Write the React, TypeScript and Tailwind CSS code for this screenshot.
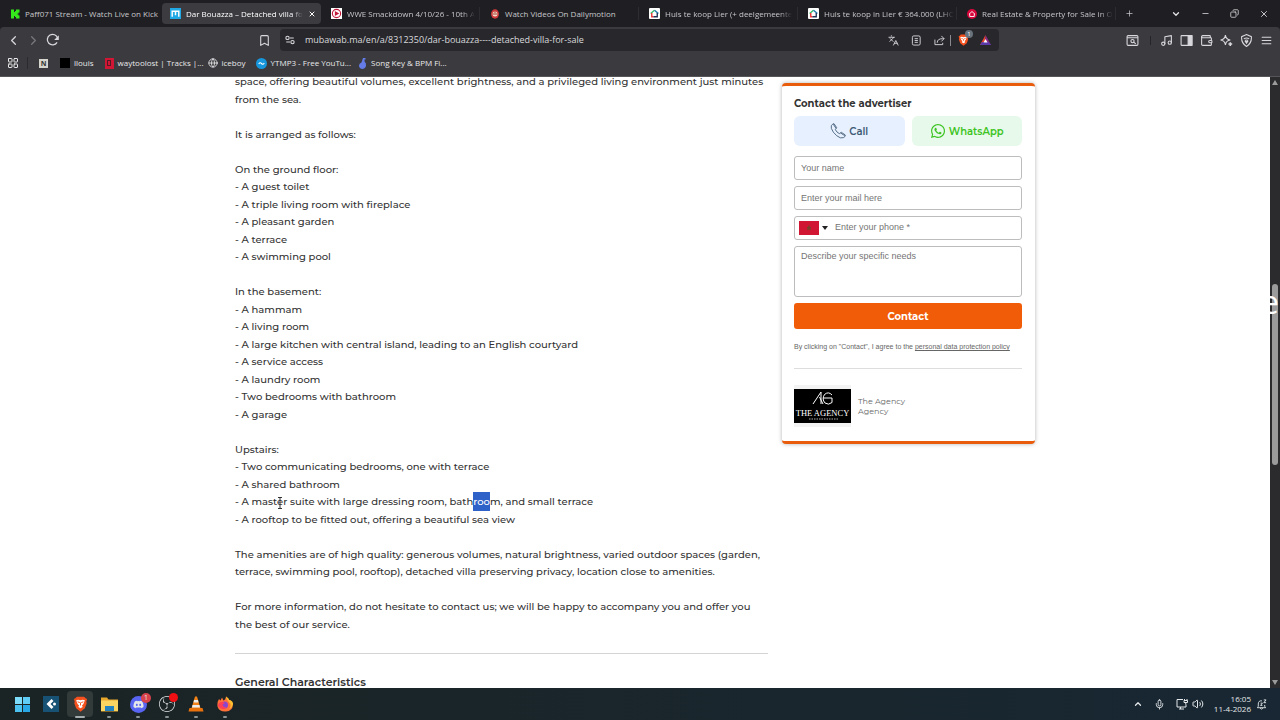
import type { ReactNode } from "react";
import {
    LuBookmark, LuChevronDown, LuChevronLeft, LuChevronRight, LuChevronUp,
    LuCopy, LuGlobe, LuLayoutGrid, LuLanguages, LuMenu, LuMic, LuMinus, LuMusic, LuPlus,
    LuVolume2, LuWallet, LuX,
} from "react-icons/lu";
import { FaWhatsapp, FaDiscord } from "react-icons/fa";
import { SiObsstudio } from "react-icons/si";

function HouseIcon() {
    return (
        <svg viewBox="0 0 20 20" className="size-[11px]">
            <rect width="20" height="20" rx="2" fill="#fff" />
            <path d="M3 10 10 4" stroke="#3b6" strokeWidth="2.5" />
            <path d="m10 4 7 6" stroke="#27a" strokeWidth="2.5" />
            <path d="M5 9v7h3" stroke="#e33" strokeWidth="2.5" fill="none" />
            <path d="M15 9v7h-7" stroke="#235" strokeWidth="2.5" fill="none" />
        </svg>
    )
}

function MubawabIcon() {
    return (
        <svg viewBox="0 0 20 20" className="size-[11px]">
            <rect width="20" height="20" fill="#21a9e6" />
            <path d="M4 16V6h12v10M10 6v7" stroke="#fff" strokeWidth="2.6" fill="none" />
        </svg>
    )
}

function BraveLion({ className }: { className: string }) {
    return (
        <svg viewBox="0 0 20 22" className={className}>
            <path d="M5 1h10l2 2 2 1-1 4 .5 2-2.5 7-6 4.500-6-4.500L1.500 10 2 8 1 4l2-1z" fill="#f4511e" />
            <path d="M4 6l3-1 3 1 3-1 3 1-2 5-2 2 1 2-3 2-3-2 1-2-2-2z" fill="#fff" />
            <path d="M6 8l3 1M14 8l-3 1M10 9v4" stroke="#f4511e" strokeWidth="1.300" />
        </svg>
    )
}

const tabs: { title: string; icon: ReactNode; active?: boolean; fade?: boolean }[] = [
    {
        title: "Paff071 Stream - Watch Live on Kick",
        icon: (
            <svg viewBox="0 0 20 20" className="size-[10px]">
                <path d="M2 1h6v5h2V4h2V1h7v6h-2v2h-2v2h2v2h2v6h-7v-3h-2v-2H8v5H2z" fill="#35e81c" />
            </svg>
        ),
    },
    { title: "Dar Bouazza – Detached villa fo", icon: <MubawabIcon />, active: true, fade: true },
    {
        title: "WWE Smackdown 4/10/26 - 10th A",
        fade: true,
        icon: (
            <svg viewBox="0 0 20 20" className="size-[11px]">
                <rect width="20" height="20" fill="#fff" />
                <circle cx="10" cy="10" r="7.5" fill="none" stroke="#c2183c" strokeWidth="2" />
                <path d="M7 5.500 15 10l-8 4.500z" fill="#c2183c" />
            </svg>
        ),
    },
    {
        title: "Watch Videos On Dailymotion",
        icon: (
            <svg viewBox="0 0 20 20" className="size-[10px]">
                <ellipse cx="10" cy="10" rx="8" ry="9.500" fill="#d0393b" />
                <circle cx="10" cy="10" r="5" fill="#f5d9c8" />
                <path d="M5 10h10M10 5v3" stroke="#9d4035" strokeWidth="2" />
            </svg>
        ),
    },
    { title: "Huis te koop Lier (+ deelgemeente", icon: <HouseIcon />, fade: true },
    { title: "Huis te koop in Lier € 364.000 (LHC", icon: <HouseIcon />, fade: true },
    {
        title: "Real Estate & Property for Sale in O",
        fade: true,
        icon: (
            <svg viewBox="0 0 20 20" className="size-[10px]">
                <circle cx="10" cy="10" r="10" fill="#d8063b" />
                <path d="M4 10.500 10 5l6 5.500h-1.500V15h-9v-4.500z" fill="none" stroke="#fff" strokeWidth="1.800" />
            </svg>
        ),
    },
];

function TabStrip() {
    return (
        <div className="flex h-[27px] shrink-0 items-center bg-[#1f1f23] pl-0.5">
            {tabs.map((tab) => (
                <button
                    key={tab.title}
                    className={
                        tab.active
                            ? "flex h-[21px] w-[159px] items-center gap-[5px] rounded bg-[#3b3b40] pr-[10px] pl-2 text-left text-white"
                            : "flex h-[13px] w-[159px] items-center gap-[5px] border-r border-[#2d2d31] pl-[10px] text-left text-[#c7c7cb] first:w-40 first:border-transparent first:pl-2"
                    }
                >
                    <span className="shrink-0">{tab.icon}</span>
                    <span className={tab.fade ? "whitespace-nowrap mask-r-from-90%" : "whitespace-nowrap"}>{tab.title}</span>
                    {tab.active && <LuX className="ml-auto size-2 shrink-0" strokeWidth={3} />}
                </button>
            ))}
            <button aria-label="New tab" className="ml-[9px] text-[#c7c7cb]"><LuPlus className="size-[9px]" /></button>
            <div className="ml-auto flex items-center gap-5 pr-[11px] text-[#e4e4e7]">
                <button aria-label="Search tabs"><LuChevronDown className="size-[10px]" strokeWidth={3} /></button>
                <button aria-label="Minimize"><LuMinus className="size-[9px]" /></button>
                <button aria-label="Restore"><LuCopy className="size-[9px] -scale-x-100" /></button>
                <button aria-label="Close"><LuX className="size-[10px]" /></button>
            </div>
        </div>
    )
}

function Toolbar() {
    return (
        <div className="flex h-[26px] shrink-0 items-center rounded-t bg-[#3b3b3f] text-[#d8d8dc]">
            <div className="flex items-center gap-[5px] pl-1.5">
                <button aria-label="Back"><LuChevronLeft className="size-[15px]" /></button>
                <button aria-label="Forward" className="text-[#77777c]"><LuChevronRight className="size-[15px]" /></button>
                <button aria-label="Reload">
                    <svg viewBox="0 0 24 24" className="size-3.5" fill="none" stroke="currentColor" strokeWidth="2.200">
                        <path d="M19 16a9 9 0 1 1 1-7" />
                        <path d="M22 4v8h-8z" fill="currentColor" stroke="none" />
                    </svg>
                </button>
            </div>
            <button aria-label="Bookmark" className="ml-[198px]"><LuBookmark className="size-[13px]" /></button>
            <div className="ml-[9px] flex h-[22px] w-[719px] items-center rounded bg-[#28282c] pl-[5px]">
                <svg viewBox="0 0 24 24" className="size-[10px] shrink-0" fill="none" stroke="currentColor" strokeWidth="2.500">
                    <circle cx="6" cy="7" r="4" />
                    <path d="M12 7h9M3 17h9" />
                    <circle cx="18" cy="17" r="4" />
                </svg>
                <input
                    aria-label="Address"
                    defaultValue="mubawab.ma/en/a/8312350/dar-bouazza----detached-villa-for-sale"
                    className="ml-2.5 min-w-0 grow text-[9px] outline-none"
                />
                <button aria-label="Translate"><LuLanguages className="size-[11px]" /></button>
                <button aria-label="Reader mode" className="ml-3">
                    <svg viewBox="0 0 22 24" className="size-[11px]" fill="none" stroke="currentColor" strokeWidth="2">
                        <rect x="2" y="2" width="17" height="20" rx="3" />
                        <path d="M7 8h7M7 12h7M7 16h7" />
                    </svg>
                </button>
                <button aria-label="Share" className="ml-3">
                    <svg viewBox="0 0 24 24" className="size-[11px]" fill="none" stroke="currentColor" strokeWidth="2">
                        <path d="M2 10v11h17v-4M7 17q0-9 12-9h3M16 2l6 6-6 6" />
                    </svg>
                </button>
                <span className="mx-[5px] h-[11px] w-px bg-[#8a8a90]" />
                <button aria-label="Shields" className="relative ml-0.5">
                    <BraveLion className="h-3 w-[11px]" />
                    <span className="absolute -top-1 left-[7px] grid size-2 place-items-center rounded-full bg-[#68727c] text-[6px] text-white">1</span>
                </button>
                <button aria-label="Rewards" className="mr-2 ml-[11px]">
                    <svg viewBox="0 0 22 20" className="h-[10px] w-[11px]">
                        <path d="M11 0 0 20h11z" fill="#e8432d" />
                        <path d="m11 0 11 20H11z" fill="#8a2a86" />
                        <path d="M0 20h22l-5-6H4z" fill="#5a39a8" />
                        <path d="m11 8 4 7H7z" fill="#fff" />
                    </svg>
                </button>
            </div>
            <div className="ml-auto flex items-center gap-[7px] pr-[7px]">
                <button aria-label="Search page">
                    <svg viewBox="0 0 24 24" className="size-[13px]" fill="none" stroke="currentColor" strokeWidth="2">
                        <rect x="2" y="3" width="20" height="18" rx="2" />
                        <path d="M2 7h20M14 15l4 3" />
                        <circle cx="12" cy="13" r="3" />
                    </svg>
                </button>
                <span className="mr-0.5 ml-1 h-[9px] w-px bg-[#252528]" />
                <button aria-label="Media"><LuMusic className="size-[13px]" /></button>
                <button aria-label="Sidebar">
                    <svg viewBox="0 0 24 24" className="size-[13px]" fill="none" stroke="currentColor" strokeWidth="2">
                        <rect x="2" y="3" width="20" height="18" rx="1" />
                        <path d="M15 3h7v18h-7z" fill="currentColor" />
                    </svg>
                </button>
                <button aria-label="Wallet"><LuWallet className="size-[13px]" /></button>
                <button aria-label="Leo AI">
                    <svg viewBox="0 0 24 24" className="size-[13px]" fill="none" stroke="currentColor" strokeWidth="2">
                        <path d="M10 2q1 8 9 9-8 1-9 9-1-8-9-9 8-1 9-9z" />
                        <path d="M19 15v7M15.500 18.500h7" strokeWidth="3" />
                    </svg>
                </button>
                <button aria-label="VPN">
                    <svg viewBox="0 0 24 24" className="size-[13px]" fill="none" stroke="currentColor" strokeWidth="2">
                        <path d="m12 1 9 4q1 12-9 18Q2 17 3 5z" />
                        <path d="M7 9q5-3 10 0M9 12q3-2 6 0" />
                        <path d="m12 17-2-3h4z" fill="currentColor" />
                    </svg>
                </button>
                <button aria-label="Menu"><LuMenu className="size-[13px]" /></button>
            </div>
        </div>
    )
}

function BookmarksBar() {
    return (
        <nav className="flex h-6 shrink-0 items-center border-b border-[#55555a] bg-[#3b3b3f] pb-[3px] pl-[7px] text-[8px] text-[#e8e8ea]">
            <button aria-label="Apps"><LuLayoutGrid className="size-3" /></button>
            <span className="ml-2 h-3 w-px bg-[#2b2b2f]" />
            <a href="#" aria-label="Notion" className="ml-[11px] grid size-[9px] place-items-center bg-[#d5d5cd] text-[7px] font-bold text-[#333]">N</a>
            <a href="#" className="ml-3 flex items-center gap-1"><span className="size-[10px] bg-black" />llouis</a>
            <a href="#" className="ml-[11px] flex items-center gap-1">
                <span className="grid h-[11px] w-[9px] place-items-center bg-[#cf1735]"><span className="h-[6px] w-1 border border-[#541824]" /></span>
                waytoolost | Tracks |...
            </a>
            <a href="#" className="ml-1 flex items-center gap-1"><LuGlobe className="size-[10px]" />iceboy</a>
            <a href="#" className="ml-[10px] flex items-center gap-1">
                <svg viewBox="0 0 20 20" className="size-[11px]">
                    <circle cx="10" cy="10" r="10" fill="#1696dc" />
                    <path d="M5 11q2-4 5-1t5-1" stroke="#fff" strokeWidth="2" fill="none" />
                </svg>
                YTMP3 - Free YouTu...
            </a>
            <a href="#" className="ml-2 flex items-center gap-1">
                <svg viewBox="0 0 16 22" className="h-[11px] w-2" fill="#657ce8">
                    <path d="M8 0h5v3h-2v4q4 3 3 9-2 6-8 6-6-2-6-7 0-4 5-6z" />
                </svg>
                Song Key & BPM Fi...
            </a>
        </nav>
    )
}

const sections = [
    {
        title: "On the ground floor:",
        items: ["A guest toilet", "A triple living room with fireplace", "A pleasant garden", "A terrace", "A swimming pool"],
    },
    {
        title: "In the basement:",
        items: [
            "A hammam",
            "A living room",
            "A large kitchen with central island, leading to an English courtyard",
            "A service access",
            "A laundry room",
            "Two bedrooms with bathroom",
            "A garage",
        ],
    },
];

function Description() {
    return (
        <article className="-mt-1 min-w-0 grow text-[10px] leading-[1.75] font-medium text-[#333]">
            <p>space, offering beautiful volumes, excellent brightness, and a privileged living environment just minutes<br />from the sea.</p>
            <br />
            <p>It is arranged as follows:</p>
            <br />
            {sections.map((section) => (
                <div key={section.title}>
                    <p>{section.title}</p>
                    <ul>
                        {section.items.map((item) => <li key={item}>- {item}</li>)}
                    </ul>
                    <br />
                </div>
            ))}
            <p>Upstairs:</p>
            <ul>
                <li>- Two communicating bedrooms, one with terrace</li>
                <li>- A shared bathroom</li>
                <li>
                    - A mas
                    <span className="relative">
                        ter
                        <svg viewBox="0 0 6 12" className="absolute top-0.5 left-1 h-3 w-1.5" stroke="#333" fill="none">
                            <path d="M1 .5h4M3 .5v11M1 11.500h4" />
                        </svg>
                    </span>
                    {" "}suite with large dressing room, bath<span className="bg-[#2f62c9] py-[3px] text-white">roo</span>m, and small terrace
                </li>
                <li>- A rooftop to be fitted out, offering a beautiful sea view</li>
            </ul>
            <br />
            <p>The amenities are of high quality: generous volumes, natural brightness, varied outdoor spaces (garden,<br />terrace, swimming pool, rooftop), detached villa preserving privacy, location close to amenities.</p>
            <br />
            <p>For more information, do not hesitate to contact us; we will be happy to accompany you and offer you<br />the best of our service.</p>
            <hr className="mt-5 border-[#d4d4d4]" />
            <h2 className="mt-5 text-[11px] leading-4 font-semibold">General Characteristics</h2>
        </article>
    )
}

function ContactCard() {
    return (
        <aside className="mt-1.5 w-[253px] shrink-0 self-start rounded border-y-[3px] border-[#e95c0c] bg-white pt-2.5 pr-[13px] pb-[14px] pl-3 shadow-[0_0_4px_rgba(0,0,0,0.3)]">
            <h2 className="text-[10px] leading-4 font-bold text-[#333]">Contact the advertiser</h2>
            <div className="mt-1 grid grid-cols-2 gap-[7px] text-[10px] font-semibold">
                <button className="flex h-[30px] items-center justify-center gap-[3px] rounded-md bg-[#e6f0fe] text-[#405a75]">
                    <svg viewBox="0 0 24 24" className="size-4" fill="none" stroke="currentColor" strokeWidth="1.300">
                        <path d="M2 4q2-3 4-3l4 6-2 3q2 4 6 6l3-2 6 4q0 3-3 4-4 2-10-3T2 8z M5 2l4 6M16 15l6 4" />
                    </svg>
                    Call
                </button>
                <button className="flex h-[30px] items-center justify-center gap-[3px] rounded-md bg-[#e7f9eb] text-[#3cc422]">
                    <FaWhatsapp className="size-4" />
                    WhatsApp
                </button>
            </div>
            <form className="mt-2.5 flex flex-col gap-1.5 font-['Liberation_Sans',sans-serif] text-[9px] text-[#757575]">
                <input aria-label="Your name" placeholder="Your name" className="h-6 rounded-[3px] border border-[#bdbdbd] px-1.5 placeholder:text-[#757575]" />
                <input aria-label="Email" placeholder="Enter your mail here" className="h-6 rounded-[3px] border border-[#bdbdbd] px-1.5 placeholder:text-[#757575]" />
                <div className="flex h-6 items-center rounded-[3px] border border-[#bdbdbd] pl-1">
                    <button type="button" aria-label="Country" className="flex items-center gap-[3px]">
                        <svg viewBox="0 0 40 28" className="h-[14px] w-5">
                            <rect width="40" height="28" fill="#d01632" />
                            <path d="M20 9l3 9-7-5h8l-7 5z" fill="none" stroke="#6d4a28" strokeWidth="1.500" />
                        </svg>
                        <svg viewBox="0 0 6 4" className="h-1 w-1.5"><path d="M0 0h6L3 4z" fill="#222" /></svg>
                    </button>
                    <input aria-label="Phone" placeholder="Enter your phone *" className="ml-[7px] min-w-0 grow placeholder:text-[#757575]" />
                </div>
                <textarea aria-label="Your needs" placeholder="Describe your specific needs" className="h-[51px] resize-none rounded-[3px] border border-[#bdbdbd] px-1.5 py-[3px] placeholder:text-[#757575]" />
                <button type="button" className="h-[26px] rounded-[3px] bg-[#f05c08] font-[Montserrat,sans-serif] text-[10px] font-bold text-white">Contact</button>
            </form>
            <p className="mt-3 font-['Liberation_Sans',sans-serif] text-[7px] leading-3 whitespace-nowrap text-[#666]">
                By clicking on "Contact", I agree to the <a href="#" className="underline">personal data protection policy</a>
            </p>
            <hr className="mt-[15px] border-[#ddd]" />
            <div className="mt-4 flex items-center gap-[7px] text-[8px] leading-[10px] text-[#666]">
                <div className="border-y-4 border-[#f3f3f3]">
                    <svg viewBox="0 0 114 68" className="h-[34px] w-[57px] bg-black" fill="#fff">
                        <path d="M38 30 54 6v24M58 30l-7-14M76 12q-7-8-15-1-6 9 1 17 7 5 14-1v-9H58" fill="none" stroke="#fff" strokeWidth="2" />
                        <text x="57" y="54" fontSize="17" textAnchor="middle" fontFamily="Liberation Serif, serif">THE AGENCY</text>
                        <path d="M30 60h60" stroke="#aaa" strokeWidth="2" strokeDasharray="3 2" />
                    </svg>
                </div>
                <p>The Agency<br />Agency</p>
            </div>
        </aside>
    )
}

function Scrollbar() {
    return (
        <div className="relative flex w-[10px] shrink-0 flex-col items-center bg-[#2b2b2d] py-[3px]">
            <svg viewBox="0 0 6 5" className="h-[5px] w-1.5" fill="#9b9b9b"><path d="M3 0 6 5H0z" /></svg>
            <div className="flex w-1.5 grow flex-col pt-[199px]"><div className="h-[181px] rounded-full bg-[#9b9b9b]" /></div>
            <svg viewBox="0 0 6 5" className="h-[5px] w-1.5" fill="#9b9b9b"><path d="M0 0h6L3 5z" /></svg>
            <span className="absolute top-[209px] right-px text-[32px] leading-8 text-white">e</span>
        </div>
    )
}

function TaskButton({ label, active, children }: { label: string; active?: boolean; children: ReactNode }) {
    return (
        <button
            aria-label={label}
            className={active ? "relative grid size-[26px] place-items-center rounded-sm bg-[#323a3a]" : "relative grid size-[26px] place-items-center"}
        >
            {children}
            <span className={active ? "absolute -bottom-px left-2 h-0.5 w-[10px] rounded-full bg-[#a6adae]" : "absolute -bottom-px left-[11px] h-0.5 w-1 rounded-full bg-[#8b9394]"} />
        </button>
    )
}

function Taskbar() {
    return (
        <footer className="flex h-8 shrink-0 items-center bg-linear-to-r from-[#1b2424] to-[#182733] pl-[9px] text-[#e4e7e9]">
            <div className="flex items-center gap-[3px]">
                <button aria-label="Start" className="grid size-[26px] place-items-center">
                    <span className="grid grid-cols-2 gap-px">
                        <span className="size-[7px] bg-[#7ddcfa]" /><span className="size-[7px] bg-[#5fcdf6]" />
                        <span className="size-[7px] bg-[#4cc2f1]" /><span className="size-[7px] bg-[#28a8e6]" />
                    </span>
                </button>
                <button aria-label="Launcher" className="grid size-[26px] place-items-center">
                    <svg viewBox="0 0 32 32" className="size-4">
                        <rect width="32" height="32" fill="#175173" />
                        <path d="m17 6 4 4-6 6 6 6-4 4L7 16z" fill="#fff" />
                        <circle cx="23" cy="16" r="3" fill="#fff" />
                    </svg>
                </button>
                <TaskButton label="Brave" active><BraveLion className="h-4 w-[15px]" /></TaskButton>
                <TaskButton label="File Explorer">
                    <svg viewBox="0 0 34 32" className="h-4 w-[17px]">
                        <path d="M0 3h12l3 4h19v24H0z" fill="#e7a82d" />
                        <path d="M0 9h34v21H0z" fill="#fcd462" />
                        <path d="M8 20h18v10H8z" fill="#2382bf" />
                    </svg>
                </TaskButton>
                <TaskButton label="Discord">
                    <span className="grid size-[17px] place-items-center rounded-full bg-[#5865f2]"><FaDiscord className="size-[11px]" /></span>
                    <span className="absolute top-0.5 right-0 grid size-[10px] place-items-center rounded-full bg-[#d8424b] text-[7px]">1</span>
                </TaskButton>
                <TaskButton label="OBS">
                    <SiObsstudio className="size-4" />
                    <span className="absolute top-0.5 right-0.5 size-[9px] rounded-full bg-[#f00f12]" />
                </TaskButton>
                <TaskButton label="VLC">
                    <svg viewBox="0 0 32 32" className="size-4">
                        <path d="M14 1h4l8 27H6z" fill="#f38318" />
                        <path d="m12 8-1 5h10l-1-5zM9 18l-1 5h16l-1-5z" fill="#eee" />
                        <path d="M3 24h26l2 7H1z" fill="#e9720d" />
                    </svg>
                </TaskButton>
                <TaskButton label="Firefox">
                    <svg viewBox="0 0 32 32" className="size-4">
                        <path d="M4 6l3 3 3-6 3 6q4-1 5-8 5 4 5 7l3 0q9 10 3 18-6 6-13 5Q4 31 1 21 0 12 4 6" fill="#ff7138" />
                        <path d="M18 1q0 6 5 10 8 8 1 16 9-5 8-13-1-4-6-6l-1 1q-1-5-7-8" fill="#ffbd2f" />
                        <circle cx="15" cy="18" r="7" fill="#8b46cf" />
                        <path d="M2 20Q3 11 11 12l5 2-5 3q1 6 8 6-9 8-17-3" fill="#ff3f55" />
                    </svg>
                </TaskButton>
            </div>
            <div className="ml-auto flex items-center pr-[13px]">
                <button aria-label="Hidden icons"><LuChevronUp className="size-[10px]" strokeWidth={3} /></button>
                <LuMic className="ml-[11px] size-[11px]" />
                <svg viewBox="0 0 24 24" className="ml-[11px] size-3" fill="none" stroke="currentColor" strokeWidth="2">
                    <path d="M14 3H2v15h18v-5M6 22h10M9 18v4" />
                    <path d="M17 2v3M22 2v3M16 5h7v4h-7zM19.500 9v4" />
                </svg>
                <LuVolume2 className="ml-1 size-3" />
                <time className="ml-[10px] text-right text-[8px] leading-[10px]">16:05<br />11-4-2026</time>
                <svg viewBox="0 0 24 24" className="ml-[5px] size-[11px]" fill="none" stroke="currentColor" strokeWidth="2">
                    <path d="M13 4q-8-1-8 7v5l-2 3h18l-2-3v-3M9 20q3 4 6 0" />
                    <path d="M10 9h4l-4 5h4M17 2h5l-5 6h5" />
                </svg>
            </div>
        </footer>
    )
}

export default function App() {
    return (
        <div className="flex h-screen flex-col overflow-hidden bg-[#1f1f23] font-['Open_Sans',sans-serif] text-[8px]">
            <TabStrip />
            <Toolbar />
            <BookmarksBar />
            <div className="flex min-h-0 grow overflow-hidden bg-white">
                <main className="min-w-0 grow overflow-hidden font-[Montserrat,sans-serif]">
                    <div className="mx-auto flex max-w-[800px] gap-[14px]">
                        <Description />
                        <ContactCard />
                    </div>
                </main>
                <Scrollbar />
            </div>
            <Taskbar />
        </div>
    )
}
